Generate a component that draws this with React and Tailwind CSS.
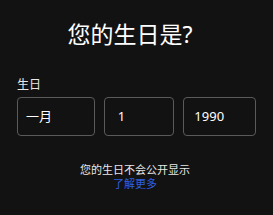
export default function App() {
  return (
    <div
      className="w-[273px] h-[215px] bg-[#121212] text-white px-[17px] pt-[19px]"
      style={{ fontFamily: '"Noto Sans", "Noto Sans CJK SC", sans-serif' }}
    >
      <h1 className="text-center text-[23px] leading-[31px] font-normal pr-[13px]">您的生日是?</h1>
      <div className="mt-[27px] text-[12px] leading-[16px] text-[#e8e8e8]">生日</div>
      <div className="mt-[4px] flex gap-[9px]">
        <div className="w-[78px] h-[39px] rounded-[4px] border border-[#5a5a5a] flex items-center pl-[8px] text-[13px]">
          一月
        </div>
        <div className="w-[71px] h-[39px] rounded-[4px] border border-[#5a5a5a] flex items-center pl-[13px] text-[13px]">
          1
        </div>
        <div className="w-[73px] h-[39px] rounded-[4px] border border-[#5a5a5a] flex items-center pl-[10px] text-[13px]">
          1990
        </div>
      </div>
      <div className="mt-[27px] text-center text-[11px] leading-[14px] text-[#e8e8e8] pr-[3px]">
        您的生日不会公开显示
      </div>
      <div className="text-center text-[11px] leading-[14px] text-[#2f5fe0] pr-[3px]">了解更多</div>
    </div>
  );
}
